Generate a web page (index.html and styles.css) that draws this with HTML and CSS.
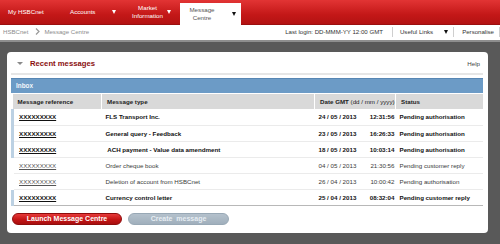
FILE: index.html
```html
<!DOCTYPE html>
<html lang="en">
  <head>
    <meta charset="UTF-8" />
    <title>HSBCnet - Message Centre</title>
    <link rel="stylesheet" href="styles.css">
  </head>
  <body>
    <nav class="topnav">
      <a class="tab tab-home">My HSBCnet</a>
      <a class="tab tab-accounts"><span>Accounts</span><i class="tri"></i></a>
      <a class="tab tab-market"><span>Market<br />Information</span><i class="tri"></i></a>
      <a class="tab tab-active"><span>Message<br />Centre</span><i class="tri dark"></i></a>
    </nav>

    <div class="crumbs">
      <div class="path">
        <span>HSBCnet</span>
        <svg class="chev" width="5" height="7" viewBox="0 0 5 7"><path d="M1 0.5 L4 3.5 L1 6.5" fill="none" stroke="#999" stroke-width="1.2" /></svg>
        <span>Message Centre</span>
      </div>
      <div class="tools">
        <span class="login">Last login: DD-MMM-YY 12:00 GMT</span>
        <b class="sep"></b>
        <span class="links">Useful Links<i class="tri dark"></i></span>
        <b class="sep"></b>
        <span class="personalise">Personalise</span>
        <b class="sep"></b>
      </div>
    </div>

    <main>
      <section class="panel">
        <header class="panel-head">
          <i class="tri grey"></i>
          <h1>Recent messages</h1>
          <a class="help">Help</a>
        </header>

        <div class="inbox">Inbox</div>

        <table class="msgs">
          <colgroup>
            <col class="c-ref" />
            <col class="c-type" />
            <col class="c-date" />
            <col class="c-status" />
          </colgroup>
          <thead>
            <tr>
              <th>Message reference</th>
              <th>Message type</th>
              <th>Date GMT <span class="fmt">(dd / mm / yyyy)</span></th>
              <th>Status</th>
            </tr>
          </thead>
          <tbody>
            <tr class="unread">
              <td><a>XXXXXXXXX</a></td>
              <td>FLS Transport Inc.</td>
              <td><div class="when"><span>24 / 05 / 2013</span><span>12:31:56</span></div></td>
              <td>Pending authorisation</td>
            </tr>
            <tr class="unread">
              <td><a>XXXXXXXXX</a></td>
              <td>General query - Feedback</td>
              <td><div class="when"><span>23 / 05 / 2013</span><span>16:26:33</span></div></td>
              <td>Pending authorisation</td>
            </tr>
            <tr class="unread">
              <td><a>XXXXXXXXX</a></td>
              <td>&nbsp;ACH payment - Value data amendment</td>
              <td><div class="when"><span>18 / 05 / 2013</span><span>10:03:14</span></div></td>
              <td>Pending authorisation</td>
            </tr>
            <tr>
              <td><a>XXXXXXXXX</a></td>
              <td>Order cheque book</td>
              <td><div class="when"><span>04 / 05 / 2013</span><span>21:30:56</span></div></td>
              <td>Pending customer reply</td>
            </tr>
            <tr>
              <td><a>XXXXXXXXX</a></td>
              <td>Deletion of account from HSBCnet</td>
              <td><div class="when"><span>26 / 04 / 2013</span><span>10:00:42</span></div></td>
              <td>Pending authorisation</td>
            </tr>
            <tr class="unread">
              <td><a>XXXXXXXXX</a></td>
              <td>Currency control letter</td>
              <td><div class="when"><span>25 / 04 / 2013</span><span>08:32:04</span></div></td>
              <td>Pending customer reply</td>
            </tr>
          </tbody>
        </table>

        <div class="actions">
          <button class="btn btn-red">Launch Message Centre</button>
          <button class="btn btn-off">Create &nbsp;message</button>
        </div>
      </section>
    </main>
  </body>
</html>
```

FILE: styles.css
```css
* {
  margin: 0;
  padding: 0;
  box-sizing: border-box;
}

body {
  width: 500px;
  height: 244px;
  overflow: hidden;
  background-color: #595959;
  font-family: "Liberation Sans", Arial, sans-serif;
  font-size: 6.2px;
  color: #333;
}

/* small triangles used in the menus */
.tri {
  display: inline-block;
  width: 0;
  height: 0;
  border-left: 2.5px solid transparent;
  border-right: 2.5px solid transparent;
  border-top: 4px solid #fff;
}
.tri.dark {
  border-top-color: #111;
}
.tri.grey {
  border-top-color: #8a8a8a;
  border-left-width: 3px;
  border-right-width: 3px;
  border-top-width: 3.5px;
}

/* top red menu */
.topnav {
  display: flex;
  align-items: flex-end;
  height: 25px;
  background: linear-gradient(#e23434, #c41818 60%, #b31212);
  border-bottom: 1px solid #9b0f0f;
}
.tab {
  display: flex;
  align-items: center;
  height: 24px;
  color: #fff;
  line-height: 1.25;
  text-align: center;
}
.tab-home {
  width: 54px;
  padding-left: 8px;
}
.tab-accounts {
  width: 72px;
  padding-left: 16px;
}
.tab-accounts .tri {
  margin-left: 17px;
}
.tab-market {
  width: 54px;
  padding-left: 5px;
}
.tab-market span {
  width: 33px;
}
.tab-market .tri {
  margin-left: 3px;
}
.tab-active {
  width: 61px;
  height: 22px;
  margin-bottom: -1px;
  padding-left: 6px;
  background-color: #fff;
  color: #555;
}
.tab-active span {
  width: 32px;
}
.tab-active .tri {
  margin-left: 14px;
}

/* breadcrumb strip */
.crumbs {
  display: flex;
  align-items: center;
  height: 17px;
  padding: 0 0 2px 3px;
  background-color: #fff;
  border-bottom: 2px solid #8e8e8e;
  font-size: 6.1px;
}
.path {
  display: flex;
  align-items: center;
  color: #8c8c8c;
}
.chev {
  margin: 0 4px 0 7px;
}
.tools {
  display: flex;
  align-items: center;
  margin-left: auto;
  color: #333;
}
.sep {
  width: 1px;
  height: 10px;
  background-color: #cfcfcf;
}
.login {
  margin-right: 9px;
}
.links {
  display: flex;
  align-items: center;
  margin: 0 5px 0 7px;
}
.links .tri {
  margin-left: 11px;
}
.personalise {
  margin: 0 5px 0 8px;
}

/* main panel */
main {
  padding: 10px 12px 0 7px;
}
.panel {
  height: 181px;
  padding: 0 5px 0 4px;
  background-color: #fff;
  border-radius: 4px;
}
.panel-head {
  display: flex;
  align-items: center;
  height: 23px;
  padding: 1px 3px 0 6px;
  border-bottom: 2px solid #e6e6e6;
}
.panel-head h1 {
  margin-left: 7px;
  font-size: 7.7px;
  font-weight: 700;
  color: #8a0f0f;
}
.help {
  margin-left: auto;
  color: #444;
}

.inbox {
  height: 15px;
  margin-top: 3px;
  padding: 3px 0 0 5px;
  background-color: #6c9bc6;
  border-top: 1px solid #5786b3;
  color: #f2f6fa;
  font-weight: 700;
  font-size: 6.4px;
}

.msgs {
  width: 100%;
  margin-top: 1px;
  border-collapse: collapse;
  table-layout: fixed;
  border-bottom: 1px solid #b8b8b8;
}
.c-ref {
  width: 89px;
}
.c-type {
  width: 213px;
}
.c-date {
  width: 81px;
}
.msgs th {
  height: 15px;
  padding: 0 0 0 5px;
  background-color: #d9d9d9;
  border-left: 1px solid #fff;
  text-align: left;
  font-weight: 700;
  color: #222;
}
.msgs th:first-child {
  border-left: none;
}
.fmt {
  font-weight: 400;
}
.msgs td {
  height: 16px;
  padding: 0 0 0 4px;
  border-top: 1px solid #ebebeb;
  white-space: nowrap;
  color: #3a3a3a;
}
.msgs td:first-child {
  padding-left: 5px;
  border-left: 3px solid transparent;
}
.msgs a {
  color: #555;
  text-decoration: underline;
}
.msgs tbody tr:first-child td {
  border-top: none;
}
.when {
  display: flex;
  justify-content: space-between;
  padding-right: 1px;
}
.unread td {
  font-weight: 700;
  color: #111;
}
.unread td:first-child {
  border-left-color: #bcd1e3;
}
.unread a {
  color: #111;
}

/* buttons */
.actions {
  display: flex;
  gap: 6px;
  margin-top: 7px;
  padding-left: 1px;
}
.btn {
  height: 12px;
  border-radius: 6px;
  font-family: "Liberation Sans", Arial, sans-serif;
  font-size: 7px;
  font-weight: 700;
}
.btn-red {
  width: 110px;
  background: linear-gradient(#e63a3a, #c41616 55%, #a80e0e);
  border: 1px solid #8e0c0c;
  color: #fff;
}
.btn-off {
  width: 101px;
  background: linear-gradient(#b4c1cc, #a0afbc);
  border: 1px solid #98a8b5;
  color: #e6edf3;
}
```
